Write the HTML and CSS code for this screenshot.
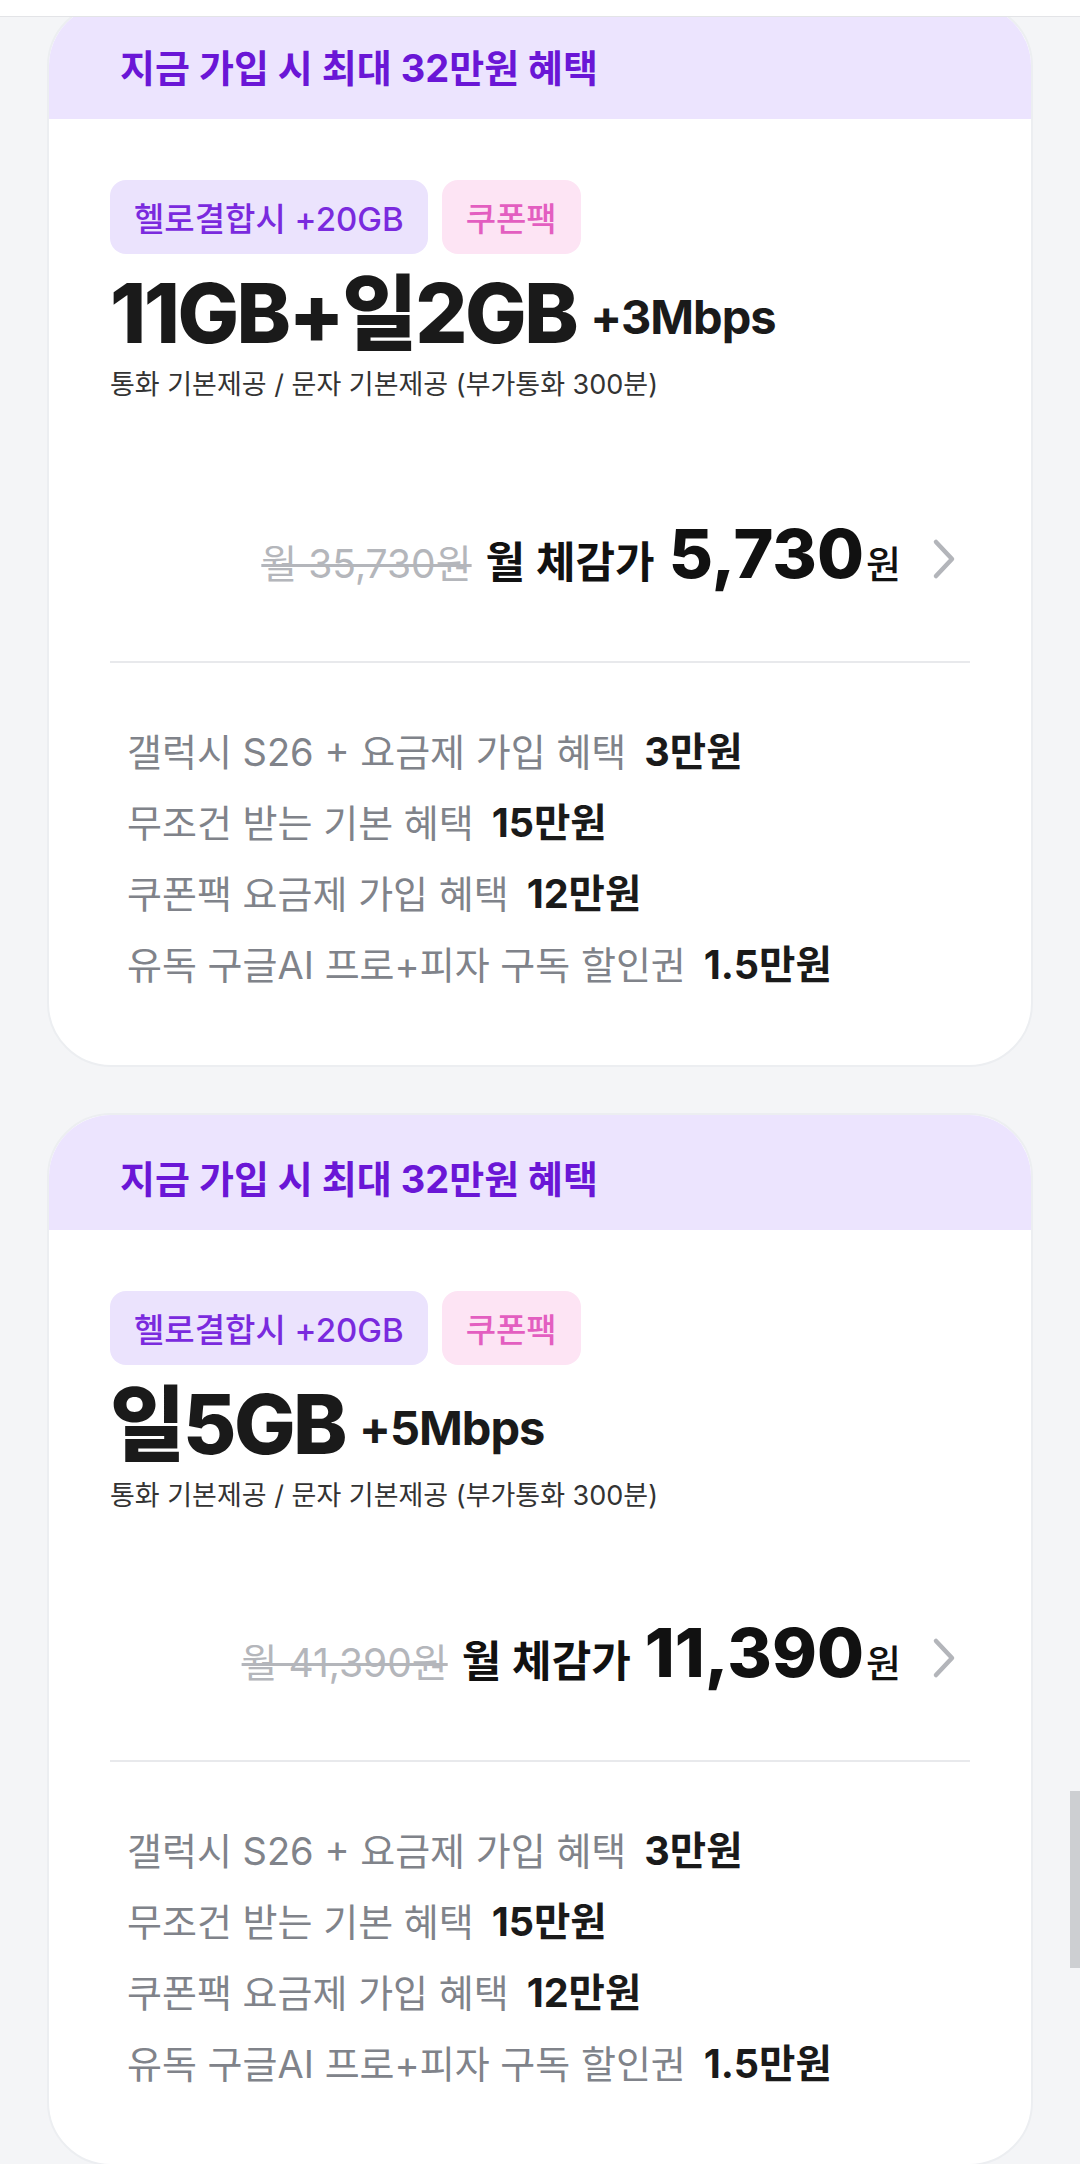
FILE: index.html
```html
<!DOCTYPE html>
<html lang="ko">
<head>
<meta charset="utf-8">
<title>요금제</title>
<link rel="stylesheet" href="styles.css">
</head>
<body>
<div class="topbar"></div>
<main class="list">
  <section class="card">
    <div class="card-head">지금 가입 시 최대 32만원 혜택</div>
    <div class="card-body">
      <div class="badges">
        <span class="badge badge-purple">헬로결합시 +20GB</span>
        <span class="badge badge-pink">쿠폰팩</span>
      </div>
      <div class="plan-title">11GB+일2GB<span class="plan-speed">+3Mbps</span></div>
      <div class="plan-desc">통화 기본제공 / 문자 기본제공 (부가통화 300분)</div>
      <div class="price-row">
        <span class="price-old">월 35,730원</span>
        <span class="price-label">월 체감가</span>
        <span class="price-num">5,730</span><span class="price-unit">원</span>
        <svg class="chevron" viewBox="0 0 26 42" width="26" height="42"><path d="M5 4 L21 21 L5 38" fill="none" stroke="#b3b5ba" stroke-width="4.5" stroke-linecap="round" stroke-linejoin="round"/></svg>
      </div>
      <hr class="divider">
      <ul class="benefits">
        <li>갤럭시 S26 + 요금제 가입 혜택<b>3만원</b></li>
        <li>무조건 받는 기본 혜택<b>15만원</b></li>
        <li>쿠폰팩 요금제 가입 혜택<b>12만원</b></li>
        <li>유독 구글AI 프로+피자 구독 할인권<b>1.5만원</b></li>
      </ul>
    </div>
  </section>

  <section class="card card-compact">
    <div class="card-head">지금 가입 시 최대 32만원 혜택</div>
    <div class="card-body">
      <div class="badges">
        <span class="badge badge-purple">헬로결합시 +20GB</span>
        <span class="badge badge-pink">쿠폰팩</span>
      </div>
      <div class="plan-title">일5GB<span class="plan-speed">+5Mbps</span></div>
      <div class="plan-desc">통화 기본제공 / 문자 기본제공 (부가통화 300분)</div>
      <div class="price-row">
        <span class="price-old">월 41,390원</span>
        <span class="price-label">월 체감가</span>
        <span class="price-num">11,390</span><span class="price-unit">원</span>
        <svg class="chevron" viewBox="0 0 26 42" width="26" height="42"><path d="M5 4 L21 21 L5 38" fill="none" stroke="#b3b5ba" stroke-width="4.5" stroke-linecap="round" stroke-linejoin="round"/></svg>
      </div>
      <hr class="divider">
      <ul class="benefits">
        <li>갤럭시 S26 + 요금제 가입 혜택<b>3만원</b></li>
        <li>무조건 받는 기본 혜택<b>15만원</b></li>
        <li>쿠폰팩 요금제 가입 혜택<b>12만원</b></li>
        <li>유독 구글AI 프로+피자 구독 할인권<b>1.5만원</b></li>
      </ul>
    </div>
  </section>
</main>
<div class="scroll-thumb"></div>
</body>
</html>
```

FILE: styles.css
```css
* { box-sizing: border-box; }

html, body {
  margin: 0;
  padding: 0;
  background: #f4f5f7;
  font-family: Inter, "Noto Sans CJK KR", sans-serif;
  color: #111;
}

.topbar {
  position: fixed;
  top: 0;
  left: 0;
  right: 0;
  height: 17px;
  background: #fff;
  border-bottom: 1px solid #e3e4e7;
  z-index: 5;
}

.scroll-thumb {
  position: fixed;
  right: 0;
  top: 1791px;
  width: 10px;
  height: 177px;
  background: #cdcfd2;
  z-index: 5;
}

.list {
  display: flex;
  flex-direction: column;
  gap: 46px;
  padding: 2px 47px 0;
}

.card {
  background: #fff;
  border: 2px solid #eceef1;
  border-radius: 64px;
  overflow: hidden;
}

.card-head {
  height: 115px;
  background: #ece4fe;
  color: #6a16d6;
  font-size: 38px;
  font-weight: 700;
  line-height: 44px;
  padding: 42px 0 0 71px;
}

.card-body {
  padding: 61px 61px 78px;
}

.badges {
  display: flex;
  gap: 14px;
}

.badge {
  height: 74px;
  display: inline-flex;
  align-items: center;
  padding: 0 24px;
  border-radius: 16px;
  font-size: 33px;
  font-weight: 500;
}

.badge-purple {
  background: #ebe3fd;
  color: #7a2ade;
}

.badge-pink {
  background: #fde4f4;
  color: #e35ec0;
}

.plan-title {
  margin-top: 15px;
  font-size: 82px;
  font-weight: 800;
  line-height: 90px;
  letter-spacing: -2.5px;
  color: #1a1a1a;
}

.plan-speed {
  font-size: 47px;
  font-weight: 700;
  line-height: 1;
  letter-spacing: -1px;
  margin-left: 14px;
  vertical-align: 9px;
}

.plan-desc {
  margin-top: 8px;
  font-size: 27px;
  line-height: 36px;
  color: #333;
}

.price-row {
  margin-top: 116px;
  height: 80px;
  display: flex;
  justify-content: flex-end;
  align-items: baseline;
  padding-right: 13px;
}

.price-row > span {
  line-height: 1;
}

.price-old {
  font-size: 39px;
  color: #b4b6bb;
  text-decoration: line-through;
  text-decoration-thickness: 3px;
  margin-right: 14px;
}

.price-label {
  font-size: 43px;
  font-weight: 600;
  margin-right: 14px;
}

.price-num {
  font-size: 68px;
  font-weight: 800;
}

.price-unit {
  font-size: 38px;
  font-weight: 500;
  margin-left: 2px;
}

.chevron {
  align-self: center;
  margin-left: 30px;
}

.divider {
  margin: 62px 0 0;
  border: 0;
  height: 2px;
  background: #e8e9ec;
}

.benefits {
  list-style: none;
  margin: 67px 0 0;
  padding: 0 0 0 17px;
  display: flex;
  flex-direction: column;
  gap: 27px;
}

.benefits li {
  font-size: 38px;
  line-height: 44px;
  color: #80838a;
}

.benefits b {
  color: #1a1a1a;
  font-weight: 700;
  font-size: 1.04em;
  margin-left: 18px;
}

.card-compact .price-row {
  margin-top: 104px;
}
```
